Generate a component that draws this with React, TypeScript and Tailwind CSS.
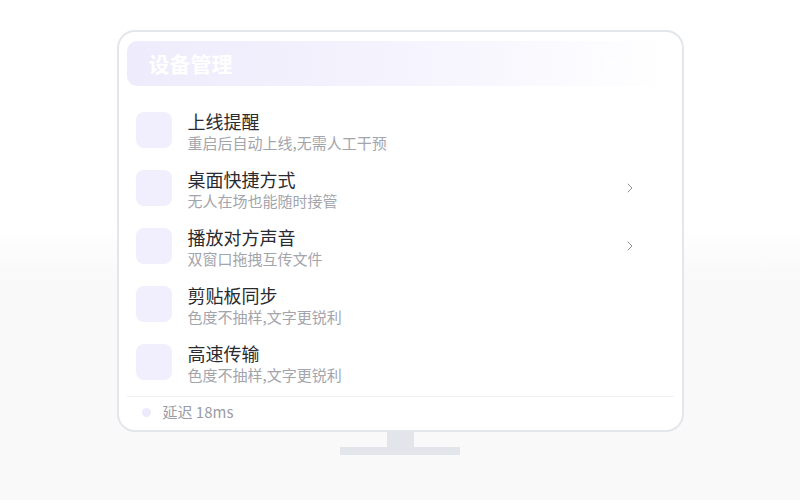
import { ChevronRight } from 'lucide-react';

type Item = {
  title: string;
  desc: string;
  arrow?: boolean;
};

const items: Item[] = [
  { title: '上线提醒', desc: '重启后自动上线,无需人工干预' },
  { title: '桌面快捷方式', desc: '无人在场也能随时接管', arrow: true },
  { title: '播放对方声音', desc: '双窗口拖拽互传文件', arrow: true },
  { title: '剪贴板同步', desc: '色度不抽样,文字更锐利' },
  { title: '高速传输', desc: '色度不抽样,文字更锐利' },
];

function SettingRow({ title, desc, arrow }: Item) {
  return (
    <div className="flex h-[58px] shrink-0 items-center pl-[9px] pr-[36px]">
      <div className="h-9 w-9 shrink-0 rounded-lg bg-[#f1eefd]" />
      <div className="ml-[16px] flex flex-1 flex-col pt-[3px]">
        <div className="text-[18px] leading-[22px] text-[#2a2b30]">{title}</div>
        <div className="text-[15px] leading-[22px] text-[#a3a5ad]">{desc}</div>
      </div>
      {arrow && <ChevronRight size={16} strokeWidth={1.5} className="text-[#8e9099]" />}
    </div>
  );
}

export default function App() {
  return (
    <div
      className="flex h-[500px] w-full flex-col items-center bg-gradient-to-b from-white from-45% to-[#f9f9fa] to-55% pt-[30px]"
      style={{ fontFamily: '"Noto Sans CJK SC", "Noto Sans", sans-serif' }}
    >
      <div className="flex h-[402px] w-[567px] flex-col rounded-[18px] border-2 border-[#e3e6ea] bg-white px-2 pb-2 pt-[9px]">
        {/* 헤더 */}
        <div className="flex h-[45px] shrink-0 items-center justify-between rounded-[10px] bg-gradient-to-r from-[#eeebfc] via-[#f5f3fd] to-white pl-[22px] pr-[20px]">
          <div className="pt-[1px] text-[21px] font-bold text-white">设备管理</div>
          <div className="flex items-center gap-[10px] opacity-70">
            <div className="h-[5px] w-[10px] rounded-full bg-white" />
            <div className="h-[5px] w-[10px] rounded-full bg-white" />
            <div className="h-[5px] w-[10px] rounded-full bg-white" />
          </div>
        </div>

        <div className="mt-[15px] flex shrink-0 flex-col">
          {items.map((item, index) => (
            <SettingRow key={index} {...item} />
          ))}
        </div>

        <div className="mt-[5px] border-t border-[#eef0f3]" />

        <div className="flex flex-1 items-center pl-[15px] pt-[5px]">
          <div className="h-[9px] w-[9px] rounded-full bg-[#eceafb]" />
          <div className="ml-[12px] text-[15px] leading-[20px] text-[#9a9ca5]">延迟 18ms</div>
        </div>
      </div>

      {/* 스탠드 */}
      <div className="h-[15px] w-[27px] bg-[#e2e5ea]" />
      <div className="h-[8px] w-[120px] bg-[#e2e5ea]" />
    </div>
  );
}
